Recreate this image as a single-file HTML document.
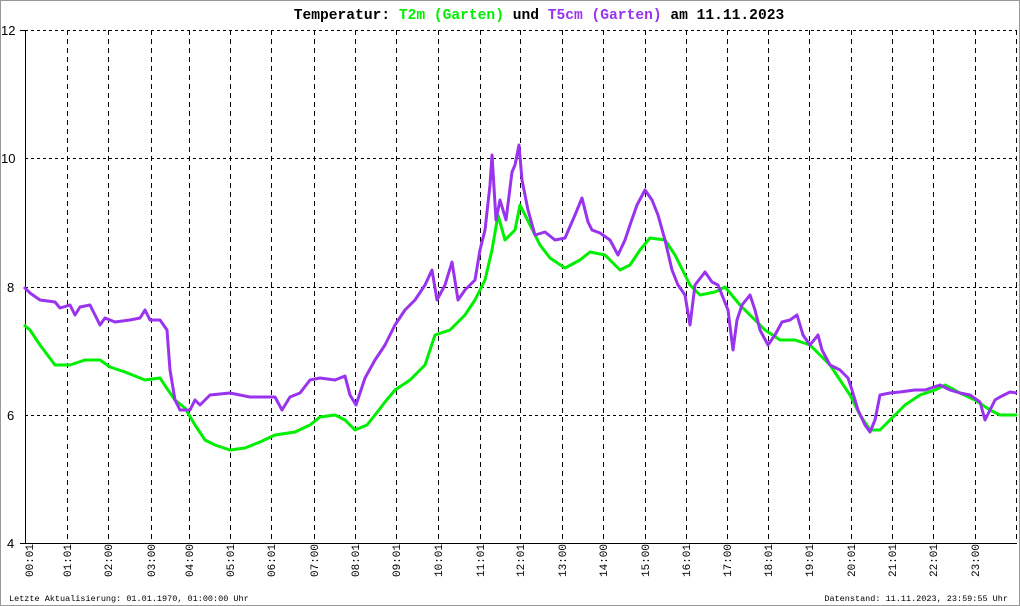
<!DOCTYPE html>
<html><head><style>
html,body{margin:0;padding:0;background:#fff;}
svg{display:block}
</style></head><body>
<svg width="1020" height="606" xmlns="http://www.w3.org/2000/svg">
<rect x="0.5" y="0.5" width="1019" height="605" fill="#fff" stroke="#999"/>
<g stroke="#000" stroke-width="1" stroke-dasharray="3,3" shape-rendering="crispEdges">
<line x1="25" y1="30.5" x2="1017" y2="30.5"/>
<line x1="25" y1="158.5" x2="1017" y2="158.5"/>
<line x1="25" y1="287.5" x2="1017" y2="287.5"/>
<line x1="25" y1="415.5" x2="1017" y2="415.5"/>
</g>
<g stroke="#000" stroke-width="1" stroke-dasharray="5,4" shape-rendering="crispEdges">
<line x1="67.5" y1="30" x2="67.5" y2="543"/><line x1="108.5" y1="30" x2="108.5" y2="543"/>
<line x1="151.5" y1="30" x2="151.5" y2="543"/><line x1="189.5" y1="30" x2="189.5" y2="543"/>
<line x1="230.5" y1="30" x2="230.5" y2="543"/><line x1="271.5" y1="30" x2="271.5" y2="543"/>
<line x1="314.5" y1="30" x2="314.5" y2="543"/><line x1="355.5" y1="30" x2="355.5" y2="543"/>
<line x1="396.5" y1="30" x2="396.5" y2="543"/><line x1="438.5" y1="30" x2="438.5" y2="543"/>
<line x1="480.5" y1="30" x2="480.5" y2="543"/><line x1="520.5" y1="30" x2="520.5" y2="543"/>
<line x1="562.5" y1="30" x2="562.5" y2="543"/><line x1="603.5" y1="30" x2="603.5" y2="543"/>
<line x1="645.5" y1="30" x2="645.5" y2="543"/><line x1="686.5" y1="30" x2="686.5" y2="543"/>
<line x1="727.5" y1="30" x2="727.5" y2="543"/><line x1="768.5" y1="30" x2="768.5" y2="543"/>
<line x1="809.5" y1="30" x2="809.5" y2="543"/><line x1="851.5" y1="30" x2="851.5" y2="543"/>
<line x1="892.5" y1="30" x2="892.5" y2="543"/><line x1="933.5" y1="30" x2="933.5" y2="543"/>
<line x1="975.5" y1="30" x2="975.5" y2="543"/><line x1="1016.5" y1="30" x2="1016.5" y2="543"/>
</g>
<g stroke="#000" shape-rendering="crispEdges">
<line x1="25.5" y1="30" x2="25.5" y2="543"/>
<line x1="20" y1="543.5" x2="1017" y2="543.5"/>
<line x1="20" y1="30.5" x2="25" y2="30.5"/>
</g>
<g font-family="Liberation Sans, sans-serif" font-size="13" fill="#000">
<text x="1" y="35">12</text><text x="1" y="163">10</text><text x="7" y="292">8</text><text x="7" y="420">6</text><text x="7" y="548">4</text>
</g>
<polyline fill="none" stroke="#00ee00" stroke-width="3" stroke-linejoin="round" points="24,325 30,330 40,345 55,365 70,365 85,360 100,360 110,367 125,372 145,380 160,378 168,390 175,400 185,408 195,425 205,440 215,445 230,450 245,448 260,442 275,435 295,432 310,425 320,417 335,415 345,420 355,430 367,425 375,415 385,402 395,390 410,380 425,365 435,335 450,330 465,315 475,300 485,280 492,250 498,215 505,240 515,230 520,205 530,225 540,245 550,258 565,268 580,260 590,252 605,255 620,270 630,265 640,250 650,238 665,240 675,255 690,285 700,295 715,292 725,287 740,305 755,320 765,330 780,340 795,340 810,345 820,355 830,365 840,380 850,395 860,415 870,430 880,430 895,415 905,405 920,395 935,390 945,385 960,393 975,400 990,410 1000,415 1017,415"/>
<polyline fill="none" stroke="#9933ee" stroke-width="3" stroke-linejoin="round" points="24,287 30,293 40,300 55,302 60,308 70,305 75,315 80,307 90,305 100,325 105,318 115,322 130,320 140,318 145,310 150,320 160,320 167,330 170,370 175,400 180,410 190,410 195,400 200,405 210,395 230,393 250,397 275,397 282,410 290,397 300,393 310,380 320,378 335,380 345,376 350,395 356,405 365,378 375,360 385,345 395,325 405,310 415,300 425,285 432,270 437,300 445,285 452,262 458,300 465,290 475,280 480,250 485,230 490,185 492,155 496,220 500,200 506,220 512,172 515,165 519,145 522,180 528,210 535,235 545,232 555,240 565,238 575,215 582,198 588,222 592,230 600,233 610,240 618,255 625,240 630,225 637,205 645,190 652,200 658,215 665,240 672,270 678,285 685,295 690,325 695,285 705,272 712,282 718,285 728,310 733,350 737,320 742,305 750,295 755,310 760,330 768,345 775,335 782,322 790,320 797,315 803,335 810,345 818,335 822,350 830,365 840,370 848,378 852,390 858,410 865,425 870,432 875,420 880,395 890,393 900,392 915,390 925,390 940,385 950,390 960,393 970,395 980,402 985,420 990,410 995,400 1000,397 1010,392 1017,393"/>
<text x="539" y="19" text-anchor="middle" font-family="Liberation Mono, monospace" font-size="14.6" font-weight="bold" fill="#000">Temperatur: <tspan fill="#00ee00">T2m (Garten)</tspan> und <tspan fill="#9933ee">T5cm (Garten)</tspan> am 11.11.2023</text>
<g font-family="Liberation Mono, monospace" font-size="11" fill="#000">
<text transform="translate(33,577) rotate(-90)">00:01</text>
<text transform="translate(71,577) rotate(-90)">01:01</text>
<text transform="translate(112,577) rotate(-90)">02:00</text>
<text transform="translate(155,577) rotate(-90)">03:00</text>
<text transform="translate(193,577) rotate(-90)">04:00</text>
<text transform="translate(234,577) rotate(-90)">05:01</text>
<text transform="translate(275,577) rotate(-90)">06:01</text>
<text transform="translate(318,577) rotate(-90)">07:00</text>
<text transform="translate(359,577) rotate(-90)">08:01</text>
<text transform="translate(400,577) rotate(-90)">09:01</text>
<text transform="translate(442,577) rotate(-90)">10:01</text>
<text transform="translate(484,577) rotate(-90)">11:01</text>
<text transform="translate(524,577) rotate(-90)">12:01</text>
<text transform="translate(566,577) rotate(-90)">13:00</text>
<text transform="translate(607,577) rotate(-90)">14:00</text>
<text transform="translate(649,577) rotate(-90)">15:00</text>
<text transform="translate(690,577) rotate(-90)">16:01</text>
<text transform="translate(731,577) rotate(-90)">17:00</text>
<text transform="translate(772,577) rotate(-90)">18:01</text>
<text transform="translate(813,577) rotate(-90)">19:01</text>
<text transform="translate(855,577) rotate(-90)">20:01</text>
<text transform="translate(896,577) rotate(-90)">21:01</text>
<text transform="translate(937,577) rotate(-90)">22:01</text>
<text transform="translate(979,577) rotate(-90)">23:00</text>
</g>
<g font-family="Liberation Mono, monospace" font-size="8.5" fill="#000">
<text x="9" y="601">Letzte Aktualisierung: 01.01.1970, 01:00:00 Uhr</text>
<text x="1008" y="601" text-anchor="end">Datenstand: 11.11.2023, 23:59:55 Uhr</text>
</g>
</svg>
</body></html>
